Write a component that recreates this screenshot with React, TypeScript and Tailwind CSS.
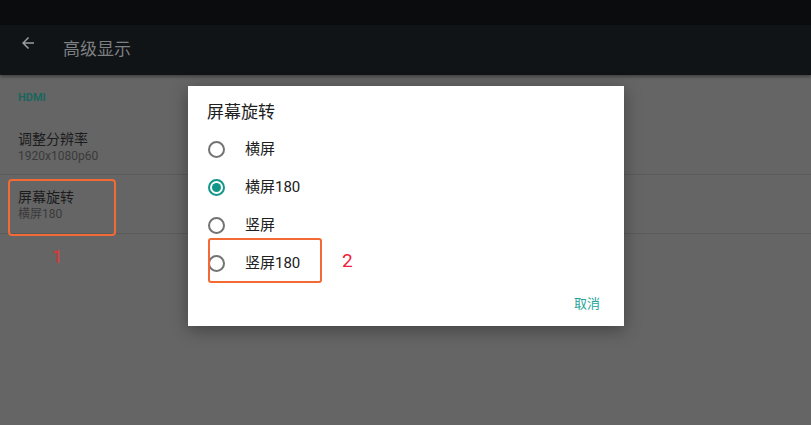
import React from "react";

const font = { fontFamily: '"Roboto", "Noto Sans CJK SC", sans-serif' };

const Radio = ({ checked }: { checked?: boolean }) => (
	<span
		className={
			"flex h-[17px] w-[17px] items-center justify-center rounded-full border-2 " +
			(checked ? "border-[#129688]" : "border-[#737373]")
		}
	>
		{checked && <span className="h-[9px] w-[9px] rounded-full bg-[#129688]" />}
	</span>
);

const options = [
	{ label: "横屏", checked: false },
	{ label: "横屏180", checked: true },
	{ label: "竖屏", checked: false },
	{ label: "竖屏180", checked: false },
];

const App = () => {
	return (
		<div className="relative h-[425px] w-[811px] overflow-hidden bg-[#656565]" style={font}>
			<div className="h-[25px] bg-[#0a0c0e]" />
			<div className="flex h-[50px] items-center bg-[#101417] shadow-[0_2px_3px_rgba(0,0,0,0.35)]">
				<svg width="18" height="18" viewBox="0 0 24 24" className="ml-[19px] -mt-[14px]">
					<path d="M20 11H7.83l5.59-5.59L12 4l-8 8 8 8 1.41-1.41L7.83 13H20v-2z" fill="#9a9c9d" />
				</svg>
				<span className="ml-[26px] text-[17px] text-[#7d7f80]">高级显示</span>
			</div>

			<div className="pt-[15px]">
				<div className="px-[18px] text-[11px] font-bold text-[#1b655d]">HDMI</div>
				<div className="mt-[23px] px-[18px] pb-[10px] border-b border-[#5b5b5b]">
					<div className="text-[14px] leading-[18px] text-[#1c1c1c]">调整分辨率</div>
					<div className="text-[12px] leading-[16px] text-[#3a3a3a]">1920x1080p60</div>
				</div>
				<div className="h-[59px] border-b border-[#5b5b5b] px-[18px] pt-[13px]">
					<div className="text-[14px] leading-[18px] text-[#1c1c1c]">屏幕旋转</div>
					<div className="text-[12px] leading-[16px] text-[#3a3a3a]">横屏180</div>
				</div>
			</div>

			<div className="absolute left-[8px] top-[179px] h-[57px] w-[108px] rounded-[4px] border-2 border-[#f26a35]" />
			<div className="absolute left-[52px] top-[243px] text-[19px] text-[#e8322f]">1</div>

			<div className="absolute left-[188px] top-[86px] h-[240px] w-[436px] bg-white shadow-[0_4px_16px_rgba(0,0,0,0.35)]">
				<div className="pl-[19px] pt-[14px] text-[17px] leading-[24px] text-[#202020]">屏幕旋转</div>
				<div className="mt-[6px] flex flex-col">
					{options.map((o) => (
						<div key={o.label} className="flex h-[38px] items-center pl-[20px]">
							<Radio checked={o.checked} />
							<span className="ml-[20px] text-[15px] text-[#202020]">{o.label}</span>
						</div>
					))}
				</div>
				<div className="flex justify-end pr-[24px] pt-[12px]">
					<span className="text-[13px] text-[#26a69a]">取消</span>
				</div>
				<div className="absolute left-[20px] top-[152px] h-[45px] w-[114px] rounded-[3px] border-2 border-[#f26a35]" />
				<div className="absolute left-[154px] top-[163px] text-[19px] leading-[24px] text-[#f0203a]">2</div>
			</div>
		</div>
	);
};

export default App;
